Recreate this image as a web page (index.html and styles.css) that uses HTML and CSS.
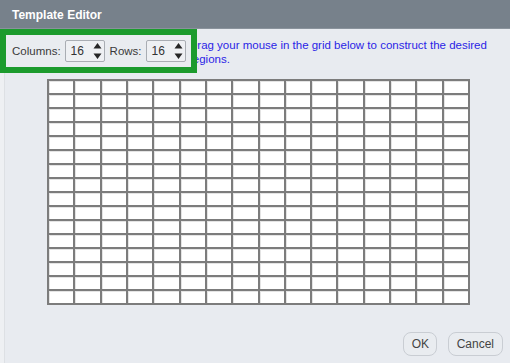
FILE: index.html
```html
<!DOCTYPE html>
<html lang="en">
<head>
    <meta charset="UTF-8">
    <title>Template Editor</title>
    <link rel="stylesheet" href="styles.css">
</head>
<body>
<div class="dialog">
    <div class="titlebar">Template Editor</div>
    <div class="main">
        <p class="hint">Drag your mouse in the grid below to construct the desired regions.</p>

        <div class="highlight">
            <label>Columns:</label>
            <div class="spin"><span>16</span>
                <svg width="9" height="20" viewBox="0 0 9 20"><path d="M4.5 2 L8.5 7.5 L0.5 7.5 Z M4.5 18 L8.5 12.5 L0.5 12.5 Z" fill="#262626"/></svg>
            </div>
            <label>Rows:</label>
            <div class="spin"><span>16</span>
                <svg width="9" height="20" viewBox="0 0 9 20"><path d="M4.5 2 L8.5 7.5 L0.5 7.5 Z M4.5 18 L8.5 12.5 L0.5 12.5 Z" fill="#262626"/></svg>
            </div>
        </div>

        <div class="grid" id="grid"></div>

        <div class="actions">
            <button class="btn">OK</button>
            <button class="btn">Cancel</button>
        </div>
    </div>
</div>
<script>
    var oGrid = document.getElementById('grid');
    for (var i = 0; i < 256; i++) {
        oGrid.appendChild(document.createElement('div'));
    }
</script>
</body>
</html>
```

FILE: styles.css
```css
* {
    margin: 0;
    padding: 0;
    box-sizing: border-box;
}

body {
    background: #eef0f3;
    font-family: "Liberation Sans", Arial, sans-serif;
    font-size: 12px;
    color: #333;
}

.dialog {
    width: 510px;
    height: 363px;
    display: flex;
    flex-direction: column;
}

.titlebar {
    height: 29px;
    background: #77818b;
    color: #fff;
    font-weight: bold;
    font-size: 12px;
    line-height: 30px;
    padding-left: 12px;
    border-bottom: 1px solid #8a939c;
}

.main {
    flex: 1;
    margin-left: 4px;
    border-left: 1px solid #dde0e4;
    background: #e8ebf0;
    position: relative;
    display: flex;
    flex-direction: column;
    padding: 9px 7px 7px 0;
}

.hint {
    margin-left: 184px;
    width: 310px;
    color: #2b1fe6;
    font-size: 11.5px;
    line-height: 14px;
    height: 41px;
}

.highlight {
    position: absolute;
    left: -5px;
    top: 0;
    width: 197px;
    height: 44px;
    border: 6px solid #1c9b2d;
    background: #e9ecf0;
    display: flex;
    align-items: center;
    padding-left: 6px;
}

.highlight label {
    margin-right: 4px;
    font-size: 11.5px;
    color: #3a3a3a;
}

.spin {
    width: 40px;
    height: 22px;
    border: 1px solid #a9adb3;
    border-radius: 2px;
    background: #eef0f3;
    display: flex;
    align-items: center;
    justify-content: space-between;
    padding: 0 2px 0 5px;
    margin-right: 5px;
}

.spin span {
    font-size: 12px;
    color: #333;
}

.grid {
    margin-left: 42px;
    width: 423px;
    height: 226px;
    background: #7c7c7c;
    padding: 2px;
    display: grid;
    grid-template-columns: repeat(16, 1fr);
    grid-template-rows: repeat(16, 1fr);
    gap: 2px;
}

.grid div {
    background: #fff;
    border-top: 1px solid #e4e4e4;
    border-left: 1px solid #e4e4e4;
}

.actions {
    margin-top: auto;
    display: flex;
    justify-content: flex-end;
    gap: 11px;
}

.btn {
    height: 24px;
    padding: 0 8px;
    border: 1px solid #c9cdd3;
    border-radius: 8px;
    background: #e9ecf0;
    font-family: "Liberation Sans", Arial, sans-serif;
    font-size: 12px;
    color: #444;
}

.btn:first-child {
    width: 34px;
}
```
